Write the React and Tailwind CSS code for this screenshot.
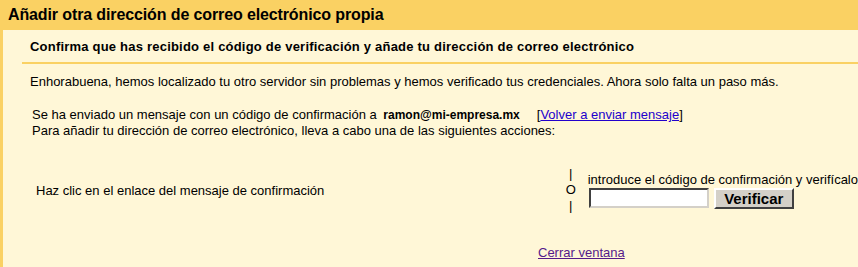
export default function App() {
  const font = { fontFamily: '"Liberation Sans", Arial, sans-serif' };
  return (
    <div className="w-[858px] h-[267px] overflow-hidden bg-[#fff7d7] text-black" style={font}>
      <div className="h-[30px] bg-[#fad163] pl-2 flex items-center text-[16px] font-bold leading-[18px] tracking-[-0.12px] whitespace-nowrap">
        Añadir otra dirección de correo electrónico propia
      </div>
      <div className="h-[237px] border-l-[3px] border-[#fad163]">
        <div className="ml-[19px]">
          <div className="h-[34px] border-b-2 border-[#fad163] pl-2 flex items-center text-[13px] font-bold leading-[15px] tracking-[0.21px] whitespace-nowrap">
            Confirma que has recibido el código de verificación y añade tu dirección de correo electrónico
          </div>
          <div className="pl-2 text-[13px] leading-[15px]">
            <div className="mt-[10px] whitespace-nowrap">
              Enhorabuena, hemos localizado tu otro servidor sin problemas y hemos verificado tus credenciales. Ahora solo falta un paso más.
            </div>
            <div className="mt-[18px] pl-[2px] whitespace-nowrap">
              <div className="flex items-baseline">
                <span>Se ha enviado un mensaje con un código de confirmación a&nbsp;</span>
                <b className="ml-[3px] text-[12px]">ramon@mi-empresa.mx</b>
                <span className="ml-[17px]">
                  [<a href="#" className="text-[#2200cc] underline">Volver a enviar mensaje</a>]
                </span>
              </div>
              <div>Para añadir tu dirección de correo electrónico, lleva a cabo una de las siguientes acciones:</div>
            </div>
            <div className="mt-[28px] flex items-center whitespace-nowrap">
              <div className="w-[535px] pl-[6px]">Haz clic en el enlace del mensaje de confirmación</div>
              <div className="w-[20px] flex flex-col items-center leading-[16px]">
                <span>|</span>
                <span>O</span>
                <span>|</span>
              </div>
              <div className="ml-[7px] flex flex-col">
                <div className="leading-[16px]">introduce el código de confirmación y verifícalo</div>
                <div className="flex items-start">
                  <input
                    type="text"
                    className="ml-px w-[120px] h-[20px] bg-white border-2 border-t-[#404040] border-l-[#404040] border-b-[#d4d0c8] border-r-[#d4d0c8] outline-none"
                  />
                  <button className="ml-[5px] w-[80px] h-[21px] bg-[#d4d0c8] border-2 border-t-white border-l-white border-b-[#404040] border-r-[#404040] text-[15px] font-bold leading-[15px]">
                    Verificar
                  </button>
                </div>
              </div>
            </div>
            <div className="mt-[31px] pl-[508px]">
              <a href="#" className="text-[#551a8b] underline">Cerrar ventana</a>
            </div>
          </div>
        </div>
      </div>
    </div>
  );
}
